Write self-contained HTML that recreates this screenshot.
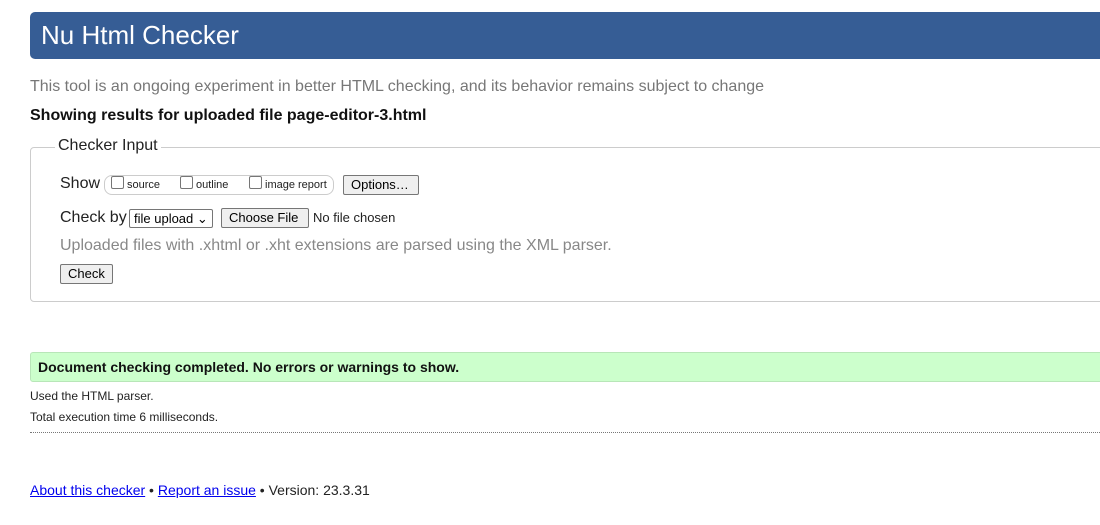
<!DOCTYPE html>
<html><head><style>
body{margin:0;width:1100px;height:525px;background:#fff;font-family:"Liberation Sans",Arial,sans-serif;position:relative;overflow:hidden;color:#000}
.a{position:absolute;white-space:nowrap}
.hdr{left:30px;top:12px;width:1090px;height:47px;background:#365d95;border-radius:5px}
.btn{position:absolute;background:#efefef;border:1px solid #767676;border-radius:2px;font-size:13px;line-height:18px;padding:0 7px;box-sizing:border-box;height:20px}
.cb{display:inline-block;width:11px;height:11px;border:1px solid #767676;border-radius:2px;vertical-align:-1px;margin-right:3px}
</style></head><body>
<div class="a hdr"></div>
<div class="a" style="left:41px;top:20px;font-size:26px;color:#fff">Nu Html Checker</div>
<div class="a" style="left:30px;top:78px;font-size:16px;color:#777">This tool is an ongoing experiment in better HTML checking, and its behavior remains subject to change</div>
<div class="a" style="left:30px;top:107px;font-size:16px;font-weight:bold;color:#111">Showing results for uploaded file page-editor-3.html</div>
<div class="a" style="left:30px;top:147px;width:1090px;height:153px;border:1px solid #ccc;border-radius:4px"></div>
<div class="a" style="left:55px;top:137px;background:#fff;padding:0 3px;font-size:16px;color:#222">Checker Input</div>
<div class="a" style="left:60px;top:175px;font-size:16px;color:#222">Show</div>
<div class="a" style="left:104px;top:175px;width:228px;height:18px;border:1px solid #ccc;border-radius:8px"></div>
<div class="a" style="left:111px;top:176px;font-size:11px;color:#222"><span class="cb"></span>source</div>
<div class="a" style="left:180px;top:176px;font-size:11px;color:#222"><span class="cb"></span>outline</div>
<div class="a" style="left:249px;top:176px;font-size:11px;color:#222"><span class="cb"></span>image report</div>
<div class="btn" style="left:343px;top:175px;width:76px">Options…</div>
<div class="a" style="left:60px;top:209px;font-size:16px;color:#222">Check by</div>
<div class="a" style="left:129px;top:209px;width:84px;height:18px;border:1px solid #767676;border-radius:2px;font-size:13px;line-height:18px;padding-left:4px;box-sizing:border-box;height:19px">file upload ⌄</div>
<div class="btn" style="left:221px;top:208px;width:88px">Choose File</div>
<div class="a" style="left:313px;top:210px;font-size:13px;color:#222">No file chosen</div>
<div class="a" style="left:60px;top:237px;font-size:16px;color:#888">Uploaded files with .xhtml or .xht extensions are parsed using the XML parser.</div>
<div class="btn" style="left:60px;top:264px;width:53px">Check</div>
<div class="a" style="left:30px;top:352px;width:1090px;height:28px;background:#ccffcc;border:1px solid #b8e6b8;border-radius:3px"></div>
<div class="a" style="left:38px;top:359px;font-size:14px;font-weight:bold;color:#111">Document checking completed. No errors or warnings to show.</div>
<div class="a" style="left:30px;top:389px;font-size:12px;color:#222">Used the HTML parser.</div>
<div class="a" style="left:30px;top:410px;font-size:12px;color:#222">Total execution time 6 milliseconds.</div>
<div class="a" style="left:30px;top:432px;width:1070px;border-top:1px dotted #777"></div>
<div class="a" style="left:30px;top:482px;font-size:14px;color:#222"><span style="color:#00e;text-decoration:underline">About this checker</span> • <span style="color:#00e;text-decoration:underline">Report an issue</span> • Version: 23.3.31</div>
</body></html>
